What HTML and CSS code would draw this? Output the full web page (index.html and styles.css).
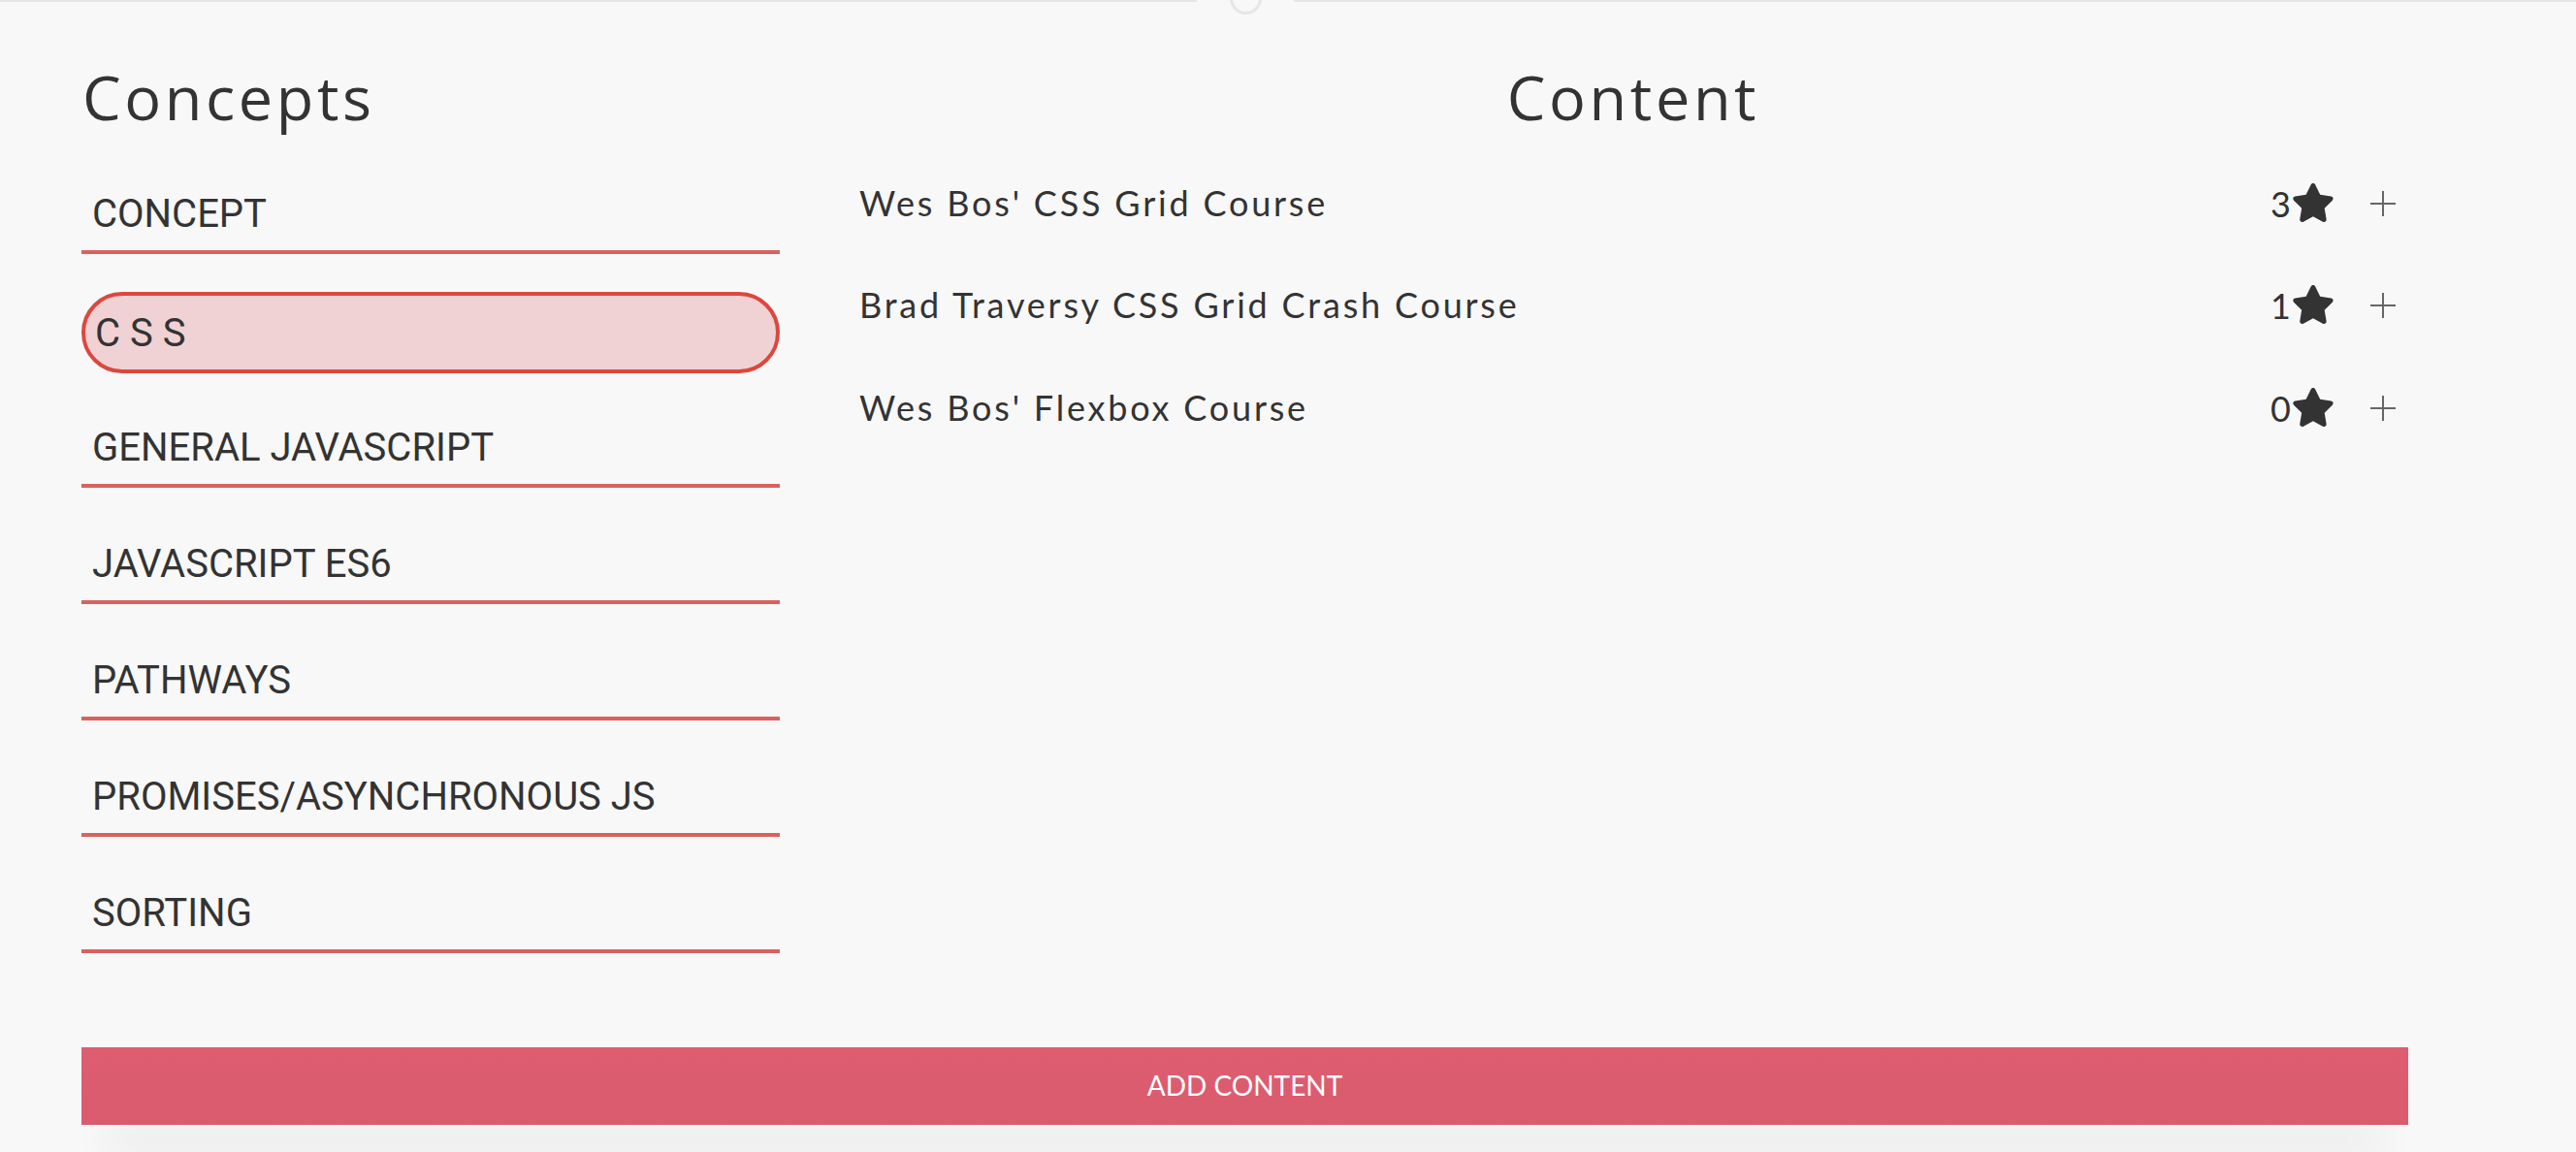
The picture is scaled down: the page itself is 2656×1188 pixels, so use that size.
FILE: index.html
```html
<!DOCTYPE html>
<html lang="en">
<head>
<meta charset="utf-8">
<title>Concepts &amp; Content</title>
<link rel="stylesheet" href="styles.css">
</head>
<body>
<div class="topbar">
  <span class="topline topline-left"></span>
  <span class="knob"><span class="knob-ring"></span></span>
  <span class="topline topline-right"></span>
</div>
<main class="page">
  <div class="columns">
    <section class="concepts">
      <h2 class="title">Concepts</h2>
      <ul class="concept-list">
        <li class="concept">CONCEPT</li>
        <li class="concept concept-active">C S S</li>
        <li class="concept">GENERAL JAVASCRIPT</li>
        <li class="concept">JAVASCRIPT ES6</li>
        <li class="concept">PATHWAYS</li>
        <li class="concept">PROMISES/ASYNCHRONOUS JS</li>
        <li class="concept">SORTING</li>
      </ul>
    </section>
    <section class="content">
      <h2 class="title title-center">Content</h2>
      <ul class="content-list">
        <li class="content-row">
          <span class="content-name">Wes Bos' CSS Grid Course</span>
          <span class="rating"><span class="rating-num">3</span><svg class="star" viewBox="26 0 526 512"><path d="M316.9 18C311.6 7 300.4 0 288.1 0s-23.4 7-28.8 18L195 150.3 51.4 171.5c-12 1.8-22 10.2-25.7 21.7s-.7 24.2 7.9 32.7L137.8 329 113.2 474.7c-2 12 3 24.2 12.9 31.3s23 8 33.8 2.3l128.3-68.5 128.3 68.5c10.8 5.7 23.9 4.9 33.8-2.3s14.9-19.3 12.9-31.3L438.5 329 542.7 225.9c8.6-8.5 11.7-21.2 7.9-32.7s-13.7-19.9-25.7-21.7L381.2 150.3 316.9 18z"/></svg></span>
          <svg class="plus" viewBox="0 0 26 26"><path d="M13 0V26M0 13H26"/></svg>
        </li>
        <li class="content-row">
          <span class="content-name">Brad Traversy CSS Grid Crash Course</span>
          <span class="rating"><span class="rating-num">1</span><svg class="star" viewBox="26 0 526 512"><path d="M316.9 18C311.6 7 300.4 0 288.1 0s-23.4 7-28.8 18L195 150.3 51.4 171.5c-12 1.8-22 10.2-25.7 21.7s-.7 24.2 7.9 32.7L137.8 329 113.2 474.7c-2 12 3 24.2 12.9 31.3s23 8 33.8 2.3l128.3-68.5 128.3 68.5c10.8 5.7 23.9 4.9 33.8-2.3s14.9-19.3 12.9-31.3L438.5 329 542.7 225.9c8.6-8.5 11.7-21.2 7.9-32.7s-13.7-19.9-25.7-21.7L381.2 150.3 316.9 18z"/></svg></span>
          <svg class="plus" viewBox="0 0 26 26"><path d="M13 0V26M0 13H26"/></svg>
        </li>
        <li class="content-row">
          <span class="content-name">Wes Bos' Flexbox Course</span>
          <span class="rating"><span class="rating-num">0</span><svg class="star" viewBox="26 0 526 512"><path d="M316.9 18C311.6 7 300.4 0 288.1 0s-23.4 7-28.8 18L195 150.3 51.4 171.5c-12 1.8-22 10.2-25.7 21.7s-.7 24.2 7.9 32.7L137.8 329 113.2 474.7c-2 12 3 24.2 12.9 31.3s23 8 33.8 2.3l128.3-68.5 128.3 68.5c10.8 5.7 23.9 4.9 33.8-2.3s14.9-19.3 12.9-31.3L438.5 329 542.7 225.9c8.6-8.5 11.7-21.2 7.9-32.7s-13.7-19.9-25.7-21.7L381.2 150.3 316.9 18z"/></svg></span>
          <svg class="plus" viewBox="0 0 26 26"><path d="M13 0V26M0 13H26"/></svg>
        </li>
      </ul>
    </section>
  </div>
  <button class="add-button" type="button">ADD CONTENT</button>
</main>
</body>
</html>
```
FILE: styles.css
```css
html, body {
  margin: 0;
  padding: 0;
}
body {
  background: #f8f8f8;
  color: #333333;
  font-family: "Lato", "Liberation Sans", sans-serif;
  overflow: hidden;
  height: 1188px;
}
.topbar {
  display: flex;
  height: 2px;
  align-items: flex-start;
}
.topline {
  height: 2px;
  background: #e6e6e6;
}
.topline-left {
  width: 1234px;
}
.topline-right {
  flex: 1;
}
.knob {
  width: 100px;
  display: flex;
  justify-content: center;
}
.knob-ring {
  width: 33px;
  height: 33px;
  box-sizing: border-box;
  border: 3px solid #e6e6e6;
  border-radius: 50%;
  margin-top: -18px;
}
.page {
  margin-left: 84px;
  width: 2399px;
  padding-top: 58px;
}
.columns {
  display: grid;
  grid-template-columns: 720px 1fr;
  column-gap: 80px;
}
.title {
  margin: 0;
  height: 80px;
  line-height: 80px;
  font-family: "Open Sans", "Liberation Sans", sans-serif;
  font-weight: 400;
  font-size: 63px;
  letter-spacing: 3.6px;
  color: #333333;
  padding-left: 1px;
}
.title-center {
  text-align: center;
}
.concept-list {
  list-style: none;
  margin: 38px 0 0;
  padding: 0;
  display: flex;
  flex-direction: column;
  gap: 36px;
}
.concept {
  box-sizing: border-box;
  height: 84px;
  padding: 6px 0 0 11px;
  line-height: 74px;
  border-bottom: 4px solid #d9625e;
  font-family: "Roboto", "Liberation Sans", sans-serif;
  font-size: 40px;
  color: #333333;
  white-space: nowrap;
}
.concept-active {
  border: 4px solid #dc483e;
  border-radius: 42px;
  background: #f0d2d4;
  padding: 2px 0 0 10px;
  margin-top: 3px;
  margin-bottom: -2px;
}
.content-list {
  list-style: none;
  margin: 17px 0 0;
  padding: 0 13px 0 0;
}
.content-row {
  display: flex;
  align-items: center;
  height: 105.5px;
}
.content-name {
  flex: 1;
  font-size: 36px;
  letter-spacing: 2.8px;
  color: #333333;
  padding-left: 2px;
  margin-top: -2px;
}
.rating {
  display: flex;
  align-items: center;
  gap: 2px;
}
.rating-num {
  font-size: 36px;
  line-height: 1;
  color: #333333;
}
.star {
  width: 42px;
  height: 40px;
  fill: #333333;
  margin-top: -2px;
}
.plus {
  width: 26px;
  height: 26px;
  margin-left: 38px;
  stroke: #666666;
  stroke-width: 2;
  fill: none;
}
.add-button {
  display: block;
  width: 100%;
  height: 80px;
  margin-top: 97px;
  padding: 0 0 3px;
  border: none;
  background: linear-gradient(#df5d70, #d95b6e);
  color: #ffffff;
  font-family: "Lato", "Liberation Sans", sans-serif;
  font-size: 28px;
  box-shadow: 0 55px 40px -25px rgba(0, 0, 0, 0.06);
  cursor: pointer;
}
```
